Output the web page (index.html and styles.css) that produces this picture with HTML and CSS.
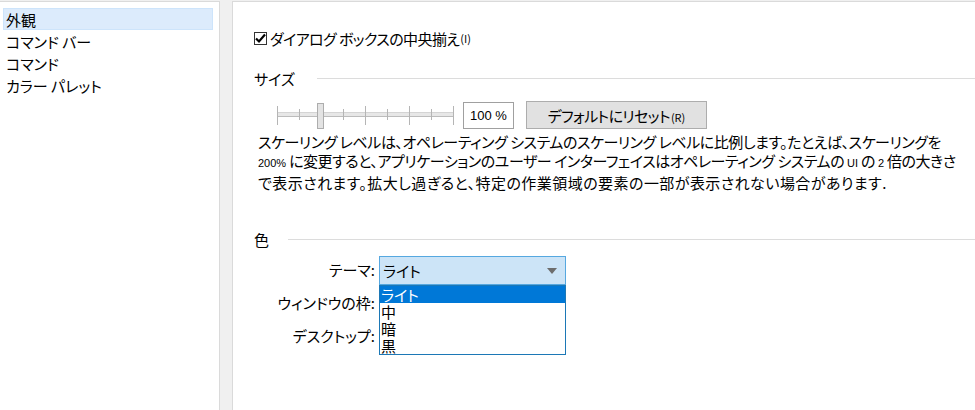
FILE: index.html
```html
<!DOCTYPE html>
<html lang="ja">
<head>
    <meta charset="UTF-8">
    <title>オプション</title>
    <link rel="stylesheet" href="styles.css">
</head>
<body>
    <div class="window">
        <div class="sidebar">
            <div class="nav-item active">外観</div>
            <div class="nav-item">コマンド バー</div>
            <div class="nav-item">コマンド</div>
            <div class="nav-item">カラー パレット</div>
        </div>

        <div class="panel">
            <label class="check-row">
                <span class="checkbox">
                    <svg width="11" height="11" viewBox="0 0 11 11"><path d="M1 5.5 L4 8.5 L10 1.5" fill="none" stroke="#000" stroke-width="2.2"/></svg>
                </span>
                <span class="tight">ダイアログ ボックスの中央揃え</span><span class="key">(I)</span>
            </label>

            <div class="section-title">
                <span>サイズ</span>
                <div class="rule"></div>
            </div>

            <div class="size-row">
                <div class="slider">
                    <div class="track"></div>
                    <div class="tick long" style="left: 0px"></div>
                    <div class="tick" style="left: 22px"></div>
                    <div class="tick long" style="left: 44px"></div>
                    <div class="tick" style="left: 66px"></div>
                    <div class="tick long" style="left: 88px"></div>
                    <div class="tick" style="left: 110px"></div>
                    <div class="tick long" style="left: 132px"></div>
                    <div class="tick" style="left: 154px"></div>
                    <div class="tick long" style="left: 176px"></div>
                    <div class="thumb"></div>
                </div>
                <div class="percent">100 %</div>
                <button class="reset"><span class="tight">デフォルトにリセット</span><span class="key">(R)</span></button>
            </div>

            <div class="note">
                <div class="line line-1">スケーリング レベルは、オペレーティング システムのスケーリング レベルに比例します。たとえば、スケーリングを</div>
                <div class="line line-2"><span class="small">200%</span> に変更すると、アプリケーションのユーザー インターフェイスはオペレーティング システムの <span class="small">UI</span> の <span class="small">2</span> 倍の大きさ</div>
                <div class="line line-3">で表示されます。拡大し過ぎると、特定の作業領域の要素の一部が表示されない場合があります.</div>
            </div>

            <div class="section-title color-title">
                <span>色</span>
                <div class="rule"></div>
            </div>

            <div class="form-grid">
                <div class="field-label">テーマ:</div>
                <div class="combo-wrap">
                    <div class="combo">
                        <span>ライト</span>
                        <svg width="10" height="6" viewBox="0 0 10 6"><path d="M0 0 H10 L5 6 Z" fill="#6d6d6d"/></svg>
                    </div>
                    <div class="dropdown">
                        <div class="option selected">ライト</div>
                        <div class="option">中</div>
                        <div class="option">暗</div>
                        <div class="option">黒</div>
                    </div>
                </div>
                <div class="field-label">ウィンドウの枠:</div>
                <div></div>
                <div class="field-label">デスクトップ:</div>
                <div></div>
            </div>
        </div>
    </div>
</body>
</html>
```

FILE: styles.css
```css
* {
    margin: 0;
    padding: 0;
    box-sizing: border-box;
}

body {
    background: #f0f0f0;
    color: #000;
    font-family: "Noto Sans CJK JP", "Noto Sans", sans-serif;
    font-size: 15px;
    font-feature-settings: "palt";
    overflow: hidden;
}

.window {
    display: flex;
    height: 410px;
    padding-top: 1px;
}

.sidebar {
    flex-shrink: 0;
    width: 220px;
    background: #fff;
    border-top: 1px solid #dadada;
    border-right: 1px solid #dadada;
    padding: 6px 0 0 3px;
    margin-right: 12px;
}

.nav-item {
    width: 210px;
    height: 22px;
    line-height: 21px;
    padding-left: 2px;
    border: 1px solid transparent;
    white-space: nowrap;
    font-size: 15px;
}

.nav-item.active {
    background: #dcebfc;
    border-color: #cde4fb;
}

.panel {
    flex: 1;
    min-width: 0;
    overflow: hidden;
    background: #fff;
    border-top: 1px solid #dadada;
    border-left: 1px solid #dadada;
    padding: 27px 0 0 21px;
}

.tight {
    letter-spacing: -0.6px;
}

.check-row {
    display: flex;
    align-items: center;
    height: 18px;
    white-space: nowrap;
}

.checkbox {
    width: 13px;
    height: 13px;
    border: 1px solid #333;
    display: flex;
    align-items: center;
    justify-content: center;
    margin-right: 3px;
}

.key {
    font-size: 11px;
    margin-left: 1px;
}

.section-title {
    display: flex;
    align-items: center;
    margin-top: 20px;
    height: 22px;
}

.section-title .rule {
    flex: 1;
    height: 1px;
    background: #dcdcdc;
    margin-left: 22px;
}

.size-row {
    display: flex;
    align-items: center;
    margin-top: 12px;
    padding-left: 23px;
    height: 28px;
}

.slider {
    position: relative;
    width: 177px;
    height: 27px;
}

.track {
    position: absolute;
    left: 0;
    right: 0;
    top: 10px;
    height: 5px;
    background: #e7e7e7;
    border-top: 1px solid #d4d4d4;
    border-bottom: 1px solid #bcbcbc;
}

.tick {
    position: absolute;
    top: 7px;
    width: 1px;
    height: 11px;
    background: #b5b5b5;
}

.tick.long {
    top: 4px;
    height: 19px;
}

.thumb {
    position: absolute;
    left: 40px;
    top: 1px;
    width: 7px;
    height: 26px;
    background: #e3e3e3;
    border: 1px solid #adadad;
}

.percent {
    width: 51px;
    height: 27px;
    margin-left: 9px;
    border: 1px solid #a0a0a0;
    font-family: "Liberation Sans", sans-serif;
    font-size: 13px;
    line-height: 25px;
    padding-left: 6px;
}

.reset {
    width: 181px;
    height: 28px;
    margin-left: 12px;
    background: #e1e1e1;
    border: 1px solid #adadad;
    font-family: inherit;
    font-size: 15px;
    font-feature-settings: "palt";
}

.note {
    margin-top: 3px;
    padding-left: 4px;
    line-height: 19px;
    white-space: nowrap;
}

.line-1 {
    letter-spacing: -0.45px;
}

.line-2 {
    letter-spacing: -0.45px;
}

.line-3 {
    letter-spacing: 0.45px;
}

.small {
    font-family: "Liberation Sans", sans-serif;
    font-size: 11px;
    letter-spacing: 0;
}

.color-title {
    margin-top: 36px;
}

.color-title .rule {
    margin-left: 19px;
}

.form-grid {
    display: grid;
    grid-template-columns: 121px 187px;
    grid-auto-rows: 33px;
    column-gap: 4px;
    margin-top: 6px;
}

.field-label {
    text-align: right;
    line-height: 27px;
    white-space: nowrap;
}

.combo-wrap {
    position: relative;
}

.combo {
    height: 29px;
    background: #cce4f7;
    border: 1px solid #56a8e0;
    display: flex;
    align-items: center;
    justify-content: space-between;
    padding: 0 8px 0 3px;
}

.dropdown {
    position: absolute;
    top: 29px;
    left: 0;
    width: 187px;
    background: #fff;
    border: 1px solid #1c78b6;
    z-index: 10;
}

.option {
    height: 17px;
    line-height: 17px;
    padding-left: 1px;
}

.option.selected {
    background: #0078d7;
    color: #fff;
}
```
